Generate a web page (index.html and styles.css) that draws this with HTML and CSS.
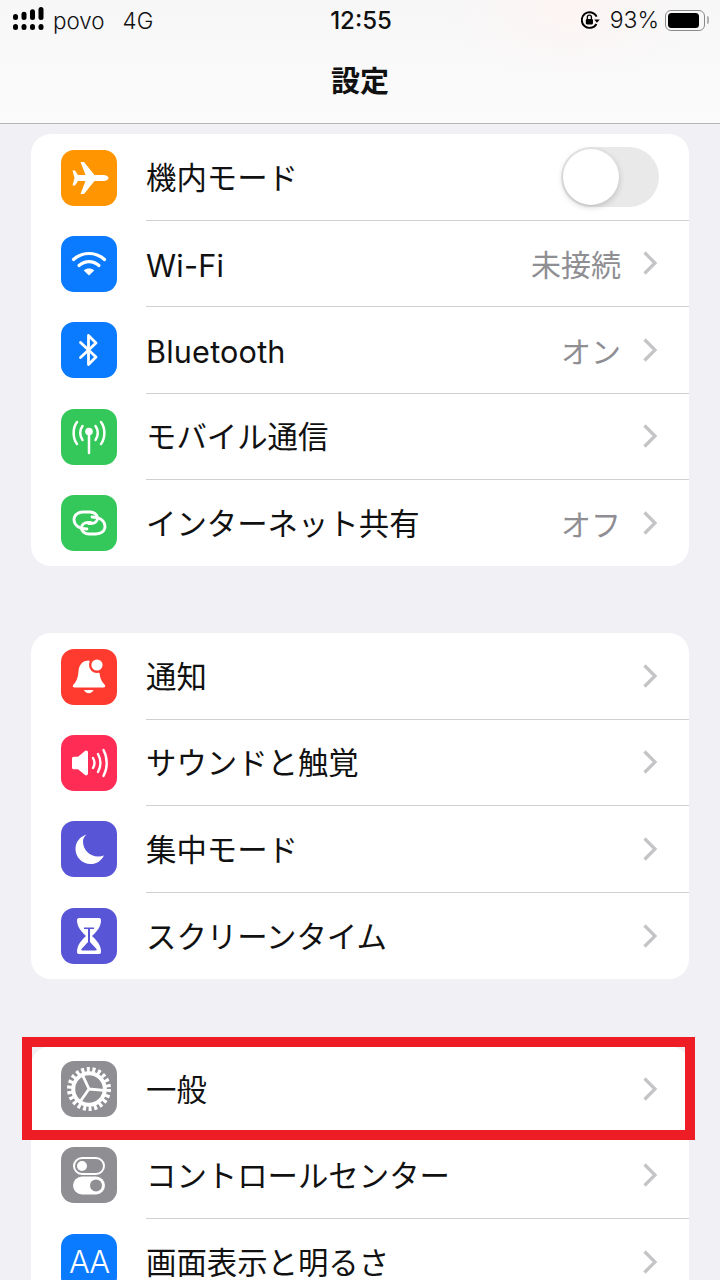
FILE: index.html
```html
<!DOCTYPE html>
<html lang="ja">
<head>
    <meta charset="UTF-8">
    <meta name="viewport" content="width=device-width, initial-scale=1.0">
    <title>設定</title>
    <link rel="stylesheet" href="styles.css">
</head>
<body>
    <header class="topbar">
        <div class="status">
            <div class="status-left">
                <svg class="signal" width="33" height="26" viewBox="0 0 33 26">
                    <g fill="#000">
                        <rect x="0" y="7" width="5" height="6" rx="2.5"/>
                        <rect x="0" y="17" width="5" height="6" rx="2.5"/>
                        <rect x="8.500" y="4.700" width="5" height="8.300" rx="2.5"/>
                        <rect x="8.500" y="17" width="5" height="6" rx="2.5"/>
                        <rect x="17" y="2.300" width="5" height="10.700" rx="2.5"/>
                        <rect x="17" y="17" width="5" height="6" rx="2.5"/>
                        <rect x="25.500" y="0" width="5" height="13" rx="2.5"/>
                        <rect x="25.500" y="17" width="5" height="6" rx="2.5"/>
                    </g>
                </svg>
                <span class="carrier">povo</span>
                <span class="network">4G</span>
            </div>
            <div class="clock">12:55</div>
            <div class="status-right">
                <svg class="lock" width="19" height="18" viewBox="0 0 17 16">
                    <path d="M13.800 11.500A7 7 0 1 1 14 5" fill="none" stroke="#000" stroke-width="1.700"/>
                    <path d="M16.800 7.500h-5l2.500 3z" fill="#000"/>
                    <rect x="4.300" y="7" width="6.400" height="5" rx="1" fill="#000"/>
                    <path d="M5.700 7V5.400a1.800 1.800 0 0 1 3.600 0V7" fill="none" stroke="#000" stroke-width="1.200"/>
                </svg>
                <span class="percent">93%</span>
                <span class="battery"><span class="battery-fill"></span></span>
                <span class="battery-tip"></span>
            </div>
        </div>
        <h1 class="title">設定</h1>
    </header>

    <main class="content">
        <section class="card">
            <div class="row">
                <span class="icon orange">
                    <svg width="40" height="40" viewBox="0 0 40 37"><path fill="#fff" d="M39.500 18.500c0-2-3-3-5-3h-9L15 2.500h-3.500l5 13H9L6 11H3.500l2 7.500-2 7.500H6l3-4.500h7.500l-5 13H15l10.500-13h9c2 0 5-1 5-3z"/></svg>
                </span>
                <div class="row-body">
                    <span class="label">機内モード</span>
                    <span class="switch"><span class="knob"></span></span>
                </div>
            </div>
            <div class="row">
                <span class="icon blue">
                    <svg width="40" height="40" viewBox="0 0 40 40"><g fill="none" stroke="#fff" stroke-width="3.200" stroke-linecap="round"><path d="M4.500 15.500c9-8 22-8 31 0"/><path d="M10 21.500c6-5.300 14-5.300 20 0"/></g><path fill="#fff" d="M14.800 26.500c3-2.600 7.400-2.600 10.400 0L20 31.500z"/></svg>
                </span>
                <div class="row-body">
                    <span class="label latin">Wi-Fi</span>
                    <span class="value">未接続</span>
                    <svg class="chevron" width="16" height="26" viewBox="0 0 16 26"><path d="M2.500 2.500 13 13 2.500 23.500" fill="none" stroke="#c4c4c7" stroke-width="3.200"/></svg>
                </div>
            </div>
            <div class="row">
                <span class="icon blue">
                    <svg width="40" height="40" viewBox="0 0 40 40"><path d="M11.500 12.500 27 27 19.500 34.500V5.500L27 13 11.500 27.500" fill="none" stroke="#fff" stroke-width="2.800" stroke-linecap="round" stroke-linejoin="round"/></svg>
                </span>
                <div class="row-body">
                    <span class="label latin">Bluetooth</span>
                    <span class="value">オン</span>
                    <svg class="chevron" width="16" height="26" viewBox="0 0 16 26"><path d="M2.500 2.500 13 13 2.500 23.500" fill="none" stroke="#c4c4c7" stroke-width="3.200"/></svg>
                </div>
            </div>
            <div class="row">
                <span class="icon green">
                    <svg width="40" height="40" viewBox="0 0 40 40"><g fill="none" stroke="#fff" stroke-width="2.500" stroke-linecap="round"><path d="M20 15v21"/><path d="M13.500 9c-3 4-3 10 0 14"/><path d="M26.500 9c3 4 3 10 0 14"/><path d="M8 5c-4.500 6-4.500 16 0 22"/><path d="M32 5c4.500 6 4.500 16 0 22"/></g><circle cx="20" cy="14.500" r="3.800" fill="#fff"/></svg>
                </span>
                <div class="row-body">
                    <span class="label">モバイル通信</span>
                    <svg class="chevron" width="16" height="26" viewBox="0 0 16 26"><path d="M2.500 2.500 13 13 2.500 23.500" fill="none" stroke="#c4c4c7" stroke-width="3.200"/></svg>
                </div>
            </div>
            <div class="row">
                <span class="icon green">
                    <svg width="40" height="40" viewBox="0 0 40 38"><g fill="none" stroke="#fff" stroke-width="2.800" stroke-linecap="round"><path d="M18 25C10 25 5 21 5 15.500 5 11 9 8 14 8H21C25.500 8 28.500 11 28.500 14 28.500 17.500 25.500 19.500 22 19.500H19.500"/><path d="M23 13C31 13 36 17 36 22.500 36 27 32 30 27 30H20C15.500 30 12.500 27 12.500 24 12.500 20.500 15.500 18.500 19 18.500H21.500"/></g></svg>
                </span>
                <div class="row-body">
                    <span class="label">インターネット共有</span>
                    <span class="value">オフ</span>
                    <svg class="chevron" width="16" height="26" viewBox="0 0 16 26"><path d="M2.500 2.500 13 13 2.500 23.500" fill="none" stroke="#c4c4c7" stroke-width="3.200"/></svg>
                </div>
            </div>
        </section>

        <section class="card">
            <div class="row">
                <span class="icon red">
                    <svg width="40" height="40" viewBox="0 0 40 40"><path fill="#fff" d="M20 3.500C13 3.500 10 8.500 9.500 14 9 20 8 24 4.500 27.500 3.200 29 3.800 30.500 5.500 30.500H34.500C36.200 30.500 36.800 29 35.500 27.500 32.500 24.500 31 21 30.500 16L20 3.500z"/><path fill="#fff" d="M15 33h9.500c-.6 2-2.600 3.200-4.700 3.200S15.600 35 15 33z"/><circle cx="28" cy="8" r="8" fill="#ff3b30"/><circle cx="28" cy="8" r="5.600" fill="#fff"/></svg>
                </span>
                <div class="row-body">
                    <span class="label">通知</span>
                    <svg class="chevron" width="16" height="26" viewBox="0 0 16 26"><path d="M2.500 2.500 13 13 2.500 23.500" fill="none" stroke="#c4c4c7" stroke-width="3.200"/></svg>
                </div>
            </div>
            <div class="row">
                <span class="icon pink">
                    <svg width="44" height="40" viewBox="0 0 44 40"><path fill="#fff" d="M5 15.500c0-1 .8-1.800 1.800-1.800H11L18 8c1.300-1 3-.2 3 1.400v21.200c0 1.600-1.700 2.400-3 1.400l-7-5.700H6.800c-1 0-1.800-.8-1.800-1.800z"/><g fill="none" stroke="#fff" stroke-width="2.400" stroke-linecap="round"><path d="M26 15c1.800 3 1.800 7 0 10"/><path d="M31 11c3 5.500 3 12.500 0 18"/><path d="M36.500 7c4.300 8 4.300 18 0 26"/></g></svg>
                </span>
                <div class="row-body">
                    <span class="label">サウンドと触覚</span>
                    <svg class="chevron" width="16" height="26" viewBox="0 0 16 26"><path d="M2.500 2.500 13 13 2.500 23.500" fill="none" stroke="#c4c4c7" stroke-width="3.200"/></svg>
                </div>
            </div>
            <div class="row">
                <span class="icon indigo">
                    <svg width="40" height="40" viewBox="0 0 40 40"><path fill="#fff" d="M17.500 5.500C11 7.500 6.500 13 6.500 20c0 8.300 6.700 15 15 15 6 0 11.300-3.500 13.500-8.800-2 1-4 1.400-6 1.400-8.300 0-15-6.700-15-15 0-2.400.8-4.800 3.500-7.100z"/></svg>
                </span>
                <div class="row-body">
                    <span class="label">集中モード</span>
                    <svg class="chevron" width="16" height="26" viewBox="0 0 16 26"><path d="M2.500 2.500 13 13 2.500 23.500" fill="none" stroke="#c4c4c7" stroke-width="3.200"/></svg>
                </div>
            </div>
            <div class="row">
                <span class="icon indigo">
                    <svg width="24" height="36" viewBox="0 0 24 36"><path fill="#fff" d="M2 0H22C23.500 0 24 1 24 2 24 8 21 12.500 15 18 21 23.500 24 28 24 34 24 35 23.500 36 22 36H2C.5 36 0 35 0 34 0 28 3 23.500 9 18 3 12.500 0 8 0 2 0 1 .5 0 2 0z"/><path fill="#5856d6" d="M7 9.500h10v1.500h-4v13l6.500 7c.5.7.2 1.500-.8 1.500H5.300c-1 0-1.300-.8-.8-1.500l6.500-7V11H7z"/></svg>
                </span>
                <div class="row-body">
                    <span class="label">スクリーンタイム</span>
                    <svg class="chevron" width="16" height="26" viewBox="0 0 16 26"><path d="M2.500 2.500 13 13 2.500 23.500" fill="none" stroke="#c4c4c7" stroke-width="3.200"/></svg>
                </div>
            </div>
        </section>

        <section class="card">
            <div class="row">
                <div class="highlight"></div>
                <span class="icon gray">
                    <svg width="46" height="46" viewBox="0 0 46 46">
                        <circle cx="23" cy="23" r="15.800" fill="none" stroke="#fff" stroke-width="4"/>
                        <circle cx="23" cy="23" r="19.500" fill="none" stroke="#fff" stroke-width="5" stroke-dasharray="3 2.570"/>
                        <g transform="rotate(-25 23 23)">
                            <path d="M23 23V8M23 23 10 30.500M23 23 36 30.500" stroke="#fff" stroke-width="2.800" fill="none"/>
                        </g>
                    </svg>
                </span>
                <div class="row-body">
                    <span class="label">一般</span>
                    <svg class="chevron" width="16" height="26" viewBox="0 0 16 26"><path d="M2.500 2.500 13 13 2.500 23.500" fill="none" stroke="#c4c4c7" stroke-width="3.200"/></svg>
                </div>
            </div>
            <div class="row">
                <span class="icon gray">
                    <svg width="44" height="44" viewBox="0 0 44 44">
                        <rect x="7" y="5" width="30" height="16" rx="8" fill="none" stroke="#fff" stroke-width="2"/>
                        <circle cx="15" cy="13" r="5" fill="#fff"/>
                        <rect x="6" y="23.500" width="32" height="18" rx="9" fill="#fff"/>
                        <circle cx="29" cy="32.500" r="6" fill="#8e8e93"/>
                    </svg>
                </span>
                <div class="row-body">
                    <span class="label">コントロールセンター</span>
                    <svg class="chevron" width="16" height="26" viewBox="0 0 16 26"><path d="M2.500 2.500 13 13 2.500 23.500" fill="none" stroke="#c4c4c7" stroke-width="3.200"/></svg>
                </div>
            </div>
            <div class="row">
                <span class="icon blue aa">AA</span>
                <div class="row-body">
                    <span class="label">画面表示と明るさ</span>
                    <svg class="chevron" width="16" height="26" viewBox="0 0 16 26"><path d="M2.500 2.500 13 13 2.500 23.500" fill="none" stroke="#c4c4c7" stroke-width="3.200"/></svg>
                </div>
            </div>
        </section>
    </main>
</body>
</html>
```

FILE: styles.css
```css
* {
    box-sizing: border-box;
}

html, body {
    margin: 0;
    height: 1280px;
    overflow: hidden;
}

body {
    background-color: #f0f0f5;
    color: #111;
    font-family: Inter, "Noto Sans CJK JP", sans-serif;
}

.topbar {
    height: 124px;
    background: radial-gradient(ellipse 130px 70px at 570px 10px, #fdf5f4, rgba(253, 245, 244, 0)), linear-gradient(#f7f7f8, #fbfbfc);
    border-bottom: 1px solid #b4b4b8;
}

.status {
    display: grid;
    grid-template-columns: 1fr auto 1fr;
    align-items: center;
    height: 40px;
    padding: 0 11px 0 13px;
    font-size: 22.400px;
}

.status-left {
    display: flex;
    align-items: center;
}

.signal {
    margin-right: 7px;
}

.carrier {
    font-weight: 300;
    margin-right: 18px;
}

.network {
    font-weight: 300;
}

.clock {
    font-size: 24px;
    font-weight: 500;
}

.status-right {
    display: flex;
    align-items: center;
    justify-content: flex-end;
}

.lock {
    margin-right: 10px;
}

.percent {
    font-size: 23px;
    font-weight: 300;
    margin-right: 6px;
}

.battery {
    display: block;
    width: 40px;
    height: 21px;
    padding: 2px;
    border: 1.500px solid #8a8a8a;
    border-radius: 6px;
}

.battery-fill {
    display: block;
    width: 92%;
    height: 100%;
    background-color: #000;
    border-radius: 3.500px;
}

.battery-tip {
    width: 2px;
    height: 8px;
    margin-left: 2px;
    background-color: #b0b0b0;
    border-radius: 0 2px 2px 0;
}

.title {
    margin: 0;
    height: 83px;
    font-size: 29px;
    font-weight: 700;
    line-height: 83px;
    text-align: center;
}

.content {
    display: flex;
    flex-direction: column;
    gap: 67px;
    padding: 10.400px 31px 0;
}

.card {
    background-color: #fff;
    border-radius: 20px;
    flex-shrink: 0;
}

.row {
    position: relative;
    display: flex;
    align-items: center;
    height: 86.400px;
    padding-left: 30px;
}

.icon {
    display: flex;
    align-items: center;
    justify-content: center;
    flex-shrink: 0;
    width: 56px;
    height: 56px;
    border-radius: 13px;
    color: #fff;
}

.orange { background-color: #ff9500; }
.blue { background-color: #0a7aff; }
.green { background-color: #34c759; }
.red { background-color: #ff3b30; }
.pink { background-color: #ff2d55; }
.indigo { background-color: #5856d6; }
.gray { background-color: #8e8e93; }

.aa {
    font-size: 31px;
    font-weight: 300;
    letter-spacing: -1px;
}

.row-body {
    display: flex;
    align-items: center;
    align-self: stretch;
    flex: 1;
    margin-left: 29px;
    padding-right: 31px;
    border-bottom: 1px solid #d0d0d3;
}

.row:last-child .row-body {
    border-bottom: none;
}

.label {
    flex: 1;
    padding-bottom: 2px;
    font-size: 30.400px;
    white-space: nowrap;
}

.latin {
    padding-top: 4px;
    padding-bottom: 0;
    font-size: 30.600px;
    letter-spacing: 0.200px;
}

.value {
    margin-right: 21px;
    font-size: 30px;
    color: #8e8e93;
}

.switch {
    display: block;
    width: 98px;
    height: 60px;
    margin-right: -1px;
    padding: 2px;
    background-color: #e9e9ea;
    border-radius: 30px;
}

.knob {
    display: block;
    width: 56px;
    height: 56px;
    background-color: #fff;
    border-radius: 50%;
    box-shadow: 0 2px 6px rgba(0, 0, 0, 0.2);
}

.highlight {
    position: absolute;
    top: -9.400px;
    left: -9px;
    right: -6px;
    height: 103px;
    border: 10px solid #ee1c25;
    z-index: 1;
}
```
